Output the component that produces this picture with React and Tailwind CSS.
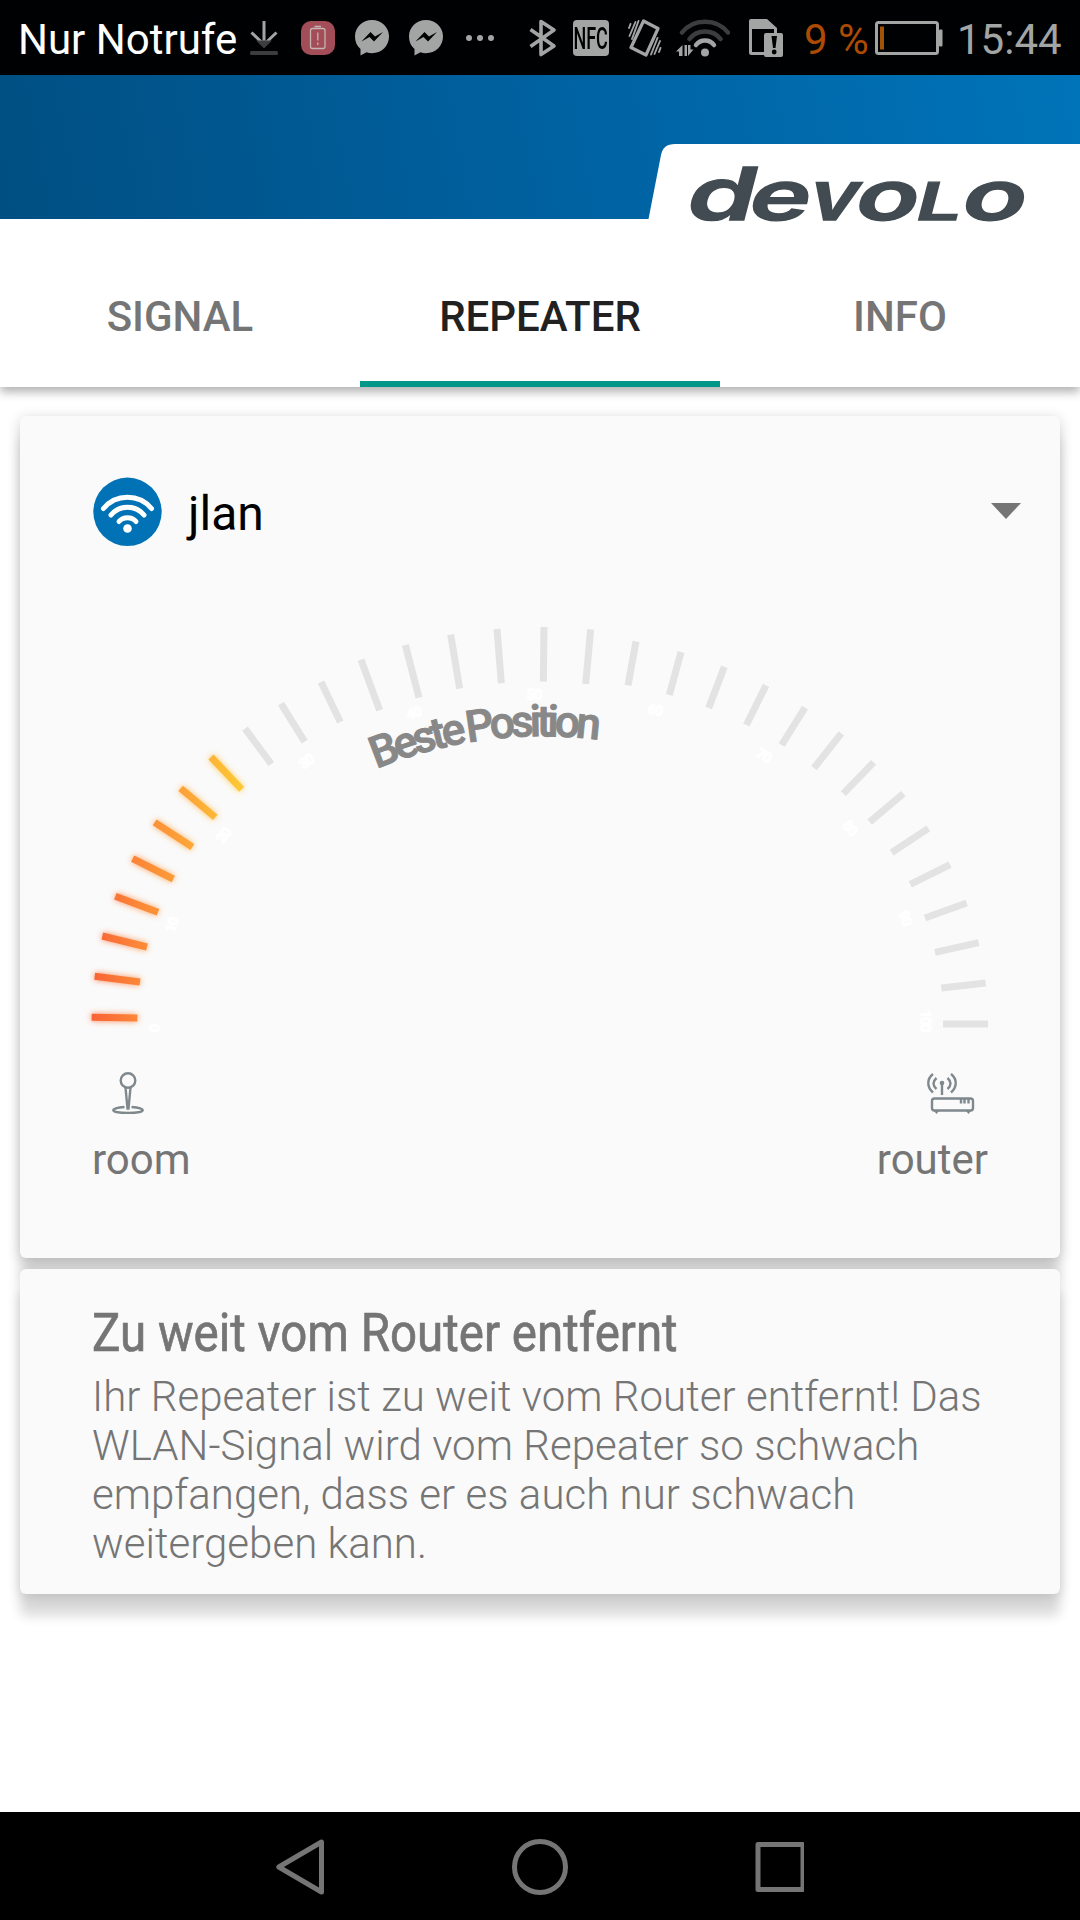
import React, { useState } from "react";

const tabs = ["SIGNAL", "REPEATER", "INFO"];

// outer x, outer y, inner x, inner y of every tick on the scale
const ticks = [
  [65, 1252, 202, 1254],
  [74, 1129, 210, 1146],
  [97, 1008, 231, 1041],
  [136, 889, 264, 937],
  [188, 776, 310, 837],
  [254, 667, 367, 741],
  [332, 565, 436, 652],
  [423, 471, 515, 568],
  [525, 386, 604, 492],
  [633, 311, 704, 425],
  [753, 246, 811, 366],
  [873, 179, 929, 331],
  [1006, 135, 1047, 293],
  [1142, 104, 1169, 266],
  [1281, 87, 1294, 250],
  [1422, 81, 1420, 245],
  [1562, 88, 1547, 252],
  [1698, 124, 1674, 256],
  [1833, 156, 1798, 285],
  [1963, 200, 1916, 324],
  [2088, 256, 2029, 375],
  [2205, 323, 2135, 435],
  [2314, 400, 2232, 504],
  [2411, 487, 2320, 581],
  [2500, 581, 2399, 666],
  [2575, 685, 2465, 758],
  [2640, 794, 2521, 853],
  [2690, 909, 2565, 954],
  [2726, 1028, 2595, 1057],
  [2747, 1149, 2614, 1164],
  [2754, 1272, 2619, 1272],
];

const scaleLabels = [
  { value: 0, x: 252, y: 1286, angle: -88 },
  { value: 10, x: 304, y: 975, angle: -73 },
  { value: 20, x: 459, y: 706, angle: -52 },
  { value: 30, x: 709, y: 484, angle: -34 },
  { value: 40, x: 1031, y: 337, angle: -16 },
  { value: 50, x: 1392, y: 283, angle: 0 },
  { value: 60, x: 1755, y: 328, angle: 13 },
  { value: 70, x: 2082, y: 465, angle: 31 },
  { value: 80, x: 2341, y: 683, angle: 50 },
  { value: 90, x: 2507, y: 953, angle: 70 },
  { value: 100, x: 2568, y: 1262, angle: 89 },
];

// every letter of the wordmark has its own stretch
const logoLetters = [
  { char: "d", x: 34.5, stretch: 1.5, size: 73 },
  { char: "e", x: 97, stretch: 1.5, size: 69 },
  { char: "v", x: 157, stretch: 1.22, size: 69 },
  { char: "o", x: 203.5, stretch: 1.5, size: 69 },
  { char: "L", x: 265, stretch: 1.55, size: 52 },
  { char: "o", x: 310, stretch: 1.53, size: 69 },
];

const MessengerIcon = ({ className }) => (
  <svg viewBox="0 0 34 36" className={`h-9 w-[34px] shrink-0 ${className}`}>
    <path
      d="M17 0C7.500 0 0 7.200 0 16.500C0 22 2 26 5.500 29V35.500L11.500 32.300C13.200 32.900 15 33.200 17 33.200C26.500 33.200 34 26 34 16.500C34 7.200 26.500 0 17 0Z"
      fill="#a3a5a4"
    />
    <path
      d="M6.500 21.500L15.500 12L20 16.500L28 12L19 21.500L14.500 17Z"
      fill="#000"
    />
  </svg>
);

const StatusBar = () => (
  <div className="flex h-[75px] items-center bg-[#000103] pt-[1px] pl-[18px] text-[42px] leading-none text-[#a3a5a4]">
    <span className="mt-[3px] w-[219px] shrink-0 whitespace-nowrap text-white">
      Nur Notrufe
    </span>
    <svg viewBox="0 0 28 36" className="ml-[13px] h-9 w-7 shrink-0">
      <path
        d="M1.500 12.500L14 24.500L26.500 12.500M14 1V24"
        fill="none"
        stroke="#a3a5a4"
        strokeWidth="3"
      />
      <path d="M6 20.500H22L14 28.500Z" fill="#3c3d3e" />
      <rect x="0" y="31" width="28" height="4" rx="1.500" fill="#3c3d3e" />
    </svg>
    <svg viewBox="0 0 34 34" className="ml-[23px] h-[34px] w-[34px] shrink-0">
      <rect width="34" height="34" rx="10" fill="#a34d59" />
      <g fill="none" stroke="#c3b5b2" strokeWidth="1.300">
        <rect x="9.500" y="7.500" width="14.500" height="20" rx="2" />
        <path d="M13.500 5.500H20M16.800 11.500V19.500M16.800 21.500V24" />
      </g>
    </svg>
    <MessengerIcon className="ml-5" />
    <MessengerIcon className="ml-5" />
    <svg viewBox="0 0 28 6" className="ml-[23px] h-[6px] w-7 shrink-0">
      <circle cx="3" cy="3" r="3" fill="#a3a5a4" />
      <circle cx="14" cy="3" r="3" fill="#a3a5a4" />
      <circle cx="25" cy="3" r="3" fill="#a3a5a4" />
    </svg>
    {/* bluetooth */}
    <svg viewBox="0 0 28 38" className="ml-[35px] h-[38px] w-7 shrink-0">
      <path
        d="M1.500 10.500L25 27L12 35.500V2.500L25 11L1.500 27.500"
        fill="none"
        stroke="#a3a5a4"
        strokeWidth="3.600"
        strokeLinejoin="round"
      />
    </svg>
    <span className="ml-4 flex h-9 w-9 shrink-0 items-center justify-center rounded-[4px] bg-[#a3a5a4]">
      <span className="scale-x-[0.58] text-[31px] font-medium text-black">
        NFC
      </span>
    </span>
    {/* vibration mode */}
    <svg
      viewBox="0 0 34 38"
      fill="none"
      stroke="#a3a5a4"
      strokeLinecap="round"
      className="ml-[19px] h-[38px] w-[34px] shrink-0"
    >
      <path
        d="M15.500 2L30 9.500L18 36L3 28.500Z"
        strokeWidth="3.200"
        strokeLinejoin="round"
      />
      <path
        d="M1 9L2.500 5M1.500 17L7.500 3M4 20L10.500 2M32.500 29L31 33M32 22L26.500 35M29.500 19L23 35.500"
        strokeWidth="1.900"
      />
    </svg>
    {/* wifi with traffic arrows */}
    <svg
      viewBox="0 0 54 38"
      fill="none"
      className="ml-[14px] h-[38px] w-[54px] shrink-0"
    >
      <path
        d="M6 13.500C17 -1 41 -1 52 13.500M13.500 20C21 10 37 10 44.500 20"
        stroke="#3c3d3e"
        strokeWidth="4.500"
        strokeLinecap="round"
      />
      <path
        d="M20 26C24.500 20 33.500 20 38 26"
        stroke="#a3a5a4"
        strokeWidth="4.500"
        strokeLinecap="round"
      />
      <circle cx="29" cy="33.500" r="4" fill="#a3a5a4" />
      <path
        d="M0 32.500L6.500 26V37H3V32.500ZM8.500 26H11V37H8.500ZM12 26H14.500V30.500H17.500L12 37Z"
        fill="#a3a5a4"
      />
    </svg>
    {/* sim card warning */}
    <svg viewBox="0 0 34 38" className="ml-[19px] h-[38px] w-[34px] shrink-0">
      <path
        d="M1.500 9V33.500Q1.500 34.500 2.500 34.500H16M26.500 9V15"
        fill="none"
        stroke="#a3a5a4"
        strokeWidth="3"
      />
      <path d="M0 2Q0 0 2 0H18L28 9V10H0Z" fill="#a3a5a4" />
      <rect x="15" y="14" width="19" height="24" rx="2" fill="#a3a5a4" />
      <path d="M22.500 17H28L26.500 29H24Z" fill="#000" />
      <circle cx="25.200" cy="33" r="2.400" fill="#000" />
    </svg>
    <span className="mt-[3px] ml-[21px] w-[66px] shrink-0 whitespace-nowrap text-[#ad4b04]">
      9 %
    </span>
    <svg viewBox="0 0 68 34" className="ml-[5px] h-[34px] w-[68px] shrink-0">
      <rect
        x="1.500"
        y="1.500"
        width="61"
        height="31"
        rx="2"
        fill="none"
        stroke="#a3a5a4"
        strokeWidth="3"
      />
      <rect x="64" y="8.500" width="3.500" height="17" rx="1" fill="#a3a5a4" />
      <rect x="5" y="5.500" width="4" height="23" fill="#a35305" />
    </svg>
    <span className="mt-[3px] ml-[14px] whitespace-nowrap">15:44</span>
  </div>
);

const Header = () => (
  <div className="relative z-10 flex h-[144px] items-end justify-end bg-linear-[80deg,#004f82_0%,#0061a0_50%,#0074b9_100%]">
    <svg viewBox="0 0 432 75" className="h-[75px] w-[432px] overflow-visible">
      <path d="M0.500 75L13 11Q15 0 27 0H432V75Z" fill="#fff" />
      <g
        fill="#414b51"
        stroke="#414b51"
        strokeWidth="1.300"
        fontFamily="Inter"
        fontWeight="600"
      >
        {logoLetters.map(({ char, x, stretch, size }) => (
          <text
            key={x}
            transform={`matrix(${stretch} 0 -0.26 1 ${x} 75.500)`}
            fontSize={size}
          >
            {char}
          </text>
        ))}
      </g>
    </svg>
  </div>
);

const Gauge = ({ level }) => (
  <svg
    viewBox="0 0 2820 1380"
    className="mt-[54px] ml-[50px] h-[460px] w-[940px] overflow-visible"
  >
    <defs>
      <linearGradient
        id="heat"
        gradientUnits="userSpaceOnUse"
        x1="65"
        y1="0"
        x2="515"
        y2="0"
      >
        <stop offset="0" stopColor="#f96235" />
        <stop offset="0.300" stopColor="#fb8638" />
        <stop offset="0.600" stopColor="#fca137" />
        <stop offset="1" stopColor="#fdc935" />
      </linearGradient>
      <filter
        id="glow"
        filterUnits="userSpaceOnUse"
        x="0"
        y="400"
        width="600"
        height="920"
      >
        <feGaussianBlur stdDeviation="9" />
      </filter>
      <path id="best" d="M919 507A1300 1300 0 0 1 1640 428" />
    </defs>
    {ticks.map(([x1, y1, x2, y2], i) =>
      i < level ? (
        <g key={i} stroke="url(#heat)" strokeWidth="21">
          <path
            d={`M${x1} ${y1}L${x2} ${y2}`}
            filter="url(#glow)"
            opacity="0.800"
          />
          <path d={`M${x1} ${y1}L${x2} ${y2}`} />
        </g>
      ) : (
        <path
          key={i}
          d={`M${x1} ${y1}L${x2} ${y2}`}
          stroke="#e3e3e3"
          strokeWidth="21"
        />
      )
    )}
    {scaleLabels.map(({ value, x, y, angle }) => (
      <text
        key={value}
        transform={`translate(${x} ${y}) rotate(${angle})`}
        y="16"
        textAnchor="middle"
        fontSize="43"
        fontWeight="700"
        letterSpacing="-3"
        fill="#fff"
        stroke="#fff"
        strokeWidth="4"
      >
        {value}
      </text>
    ))}
    <text
      fontSize="132"
      fontWeight="500"
      letterSpacing="-12.800"
      wordSpacing="-7"
      fill="#888"
      stroke="#888"
      strokeWidth="3"
    >
      <textPath href="#best">Beste Position</textPath>
    </text>
  </svg>
);

const PinIcon = () => (
  <svg
    viewBox="0 0 32 42"
    fill="none"
    stroke="#7f888c"
    strokeWidth="2.400"
    className="ml-5 h-[42px] w-8"
  >
    <circle cx="16" cy="8.500" r="7.300" />
    <path d="M13.500 15.500L15.500 36.500H16.500L18.500 15.500" />
    <path d="M12.500 35C-3 36 -3 41 16 41S35 36 19.500 35" />
  </svg>
);

const RouterIcon = () => (
  <svg
    viewBox="0 0 48 42"
    fill="none"
    stroke="#7f888c"
    strokeWidth="2.400"
    className="mr-[13px] h-[42px] w-12"
  >
    <path d="M6 2C-0.300 7 -0.300 15 6 20.500M9.500 6C5.500 9.500 5.500 13.500 9.500 17M24 2C30.300 7 30.300 15 24 20.500M20.500 6C24.500 9.500 24.500 13.500 20.500 17M15 12V23" />
    <circle cx="15" cy="11" r="2.300" fill="#7f888c" stroke="none" />
    <rect x="5" y="26.500" width="41" height="12" rx="2.500" />
    <path d="M34 27V31.500M37.500 27V31.500M41.500 27V31.500" />
    <path d="M7 39H12L9.500 42ZM39 39H44L41.500 42Z" fill="#7f888c" stroke="none" />
  </svg>
);

const App = () => {
  const [activeTab, setActiveTab] = useState("REPEATER");

  return (
    <div className="flex h-[1920px] w-[1080px] flex-col overflow-hidden bg-white font-[Roboto,sans-serif]">
      <StatusBar />
      <Header />
      <div className="grid h-[168px] shrink-0 grid-cols-3 pt-7 shadow-[0_5px_9px_rgba(0,0,0,0.3)]">
        {tabs.map((tab) => (
          <button
            key={tab}
            type="button"
            onClick={() => setActiveTab(tab)}
            className={`flex flex-col items-center justify-end text-[42px] leading-[49px] font-medium ${
              activeTab === tab ? "text-[#212121]" : "text-[#757575]"
            }`}
          >
            <span className="mb-[40px]">{tab}</span>
            <span
              className={`h-[6px] w-full ${
                activeTab === tab ? "bg-[#009688]" : ""
              }`}
            />
          </button>
        ))}
      </div>

      <div className="mx-5 mt-[29px] h-[842px] shrink-0 rounded-[6px] bg-[#fafafa] pt-[61px] shadow-[0_22px_12px_rgba(0,0,0,0.13),0_3px_14px_rgba(0,0,0,0.2)]">
        <div className="flex h-[69px] items-center pr-[39px] pl-[73px]">
          <svg viewBox="0 0 69 69" className="h-[69px] w-[69px]">
            <circle cx="34.500" cy="34.800" r="34.200" fill="#0072b5" />
            <g fill="none" stroke="#fff" strokeWidth="5" strokeLinecap="round">
              <path d="M10.500 31.500C23 16.500 46 16.500 58.500 31.500" />
              <path d="M18 38C26.500 27.500 42.500 27.500 51 38" />
              <path d="M26 44.500C30 39.500 39 39.500 43 44.500" />
            </g>
            <circle cx="34.500" cy="51.500" r="4.300" fill="#fff" />
          </svg>
          <span className="mt-1 ml-[26px] text-[48px] leading-none text-black">
            jlan
          </span>
          <svg viewBox="0 0 30 16" className="mt-[-2px] ml-auto h-4 w-[30px]">
            <path d="M0 0H30L15 16Z" fill="#757575" />
          </svg>
        </div>
        <Gauge level={8} />
        <div className="mt-3 flex justify-between px-[72px] text-[42px] leading-[49px] text-[#757575]">
          <div className="flex flex-col items-start">
            <PinIcon />
            <span className="mt-[21px]">room</span>
          </div>
          <div className="flex flex-col items-end">
            <RouterIcon />
            <span className="mt-[21px]">router</span>
          </div>
        </div>
      </div>

      <div className="mx-5 mt-[11px] h-[325px] shrink-0 rounded-[6px] bg-[#fafafa] px-[72px] pt-[34px] text-[#757575] shadow-[0_22px_12px_rgba(0,0,0,0.14),0_3px_14px_rgba(0,0,0,0.14)]">
        <h2 className="w-max origin-left scale-x-[0.879] text-[54px] leading-[60px] whitespace-nowrap [-webkit-text-stroke:0.7px_#757575]">
          Zu weit vom Router entfernt
        </h2>
        <p className="mt-[9px] text-[42px] leading-[49px] font-light tracking-[0.03px] whitespace-nowrap">
          Ihr Repeater ist zu weit vom Router entfernt! Das
          <br />
          WLAN-Signal wird vom Repeater so schwach
          <br />
          empfangen, dass er es auch nur schwach
          <br />
          weitergeben kann.
        </p>
      </div>

      <div className="mt-auto flex h-[108px] shrink-0 items-center justify-center bg-black">
        <svg
          viewBox="0 0 528 60"
          fill="none"
          stroke="#757575"
          strokeWidth="5"
          strokeLinejoin="round"
          className="mt-[2px] h-[60px] w-[528px]"
        >
          <path d="M2.800 30L45.500 5V55Z" />
          <circle cx="264" cy="30" r="25.500" />
          <rect x="482" y="7.500" width="45" height="45" />
        </svg>
      </div>
    </div>
  );
};

export default App;
